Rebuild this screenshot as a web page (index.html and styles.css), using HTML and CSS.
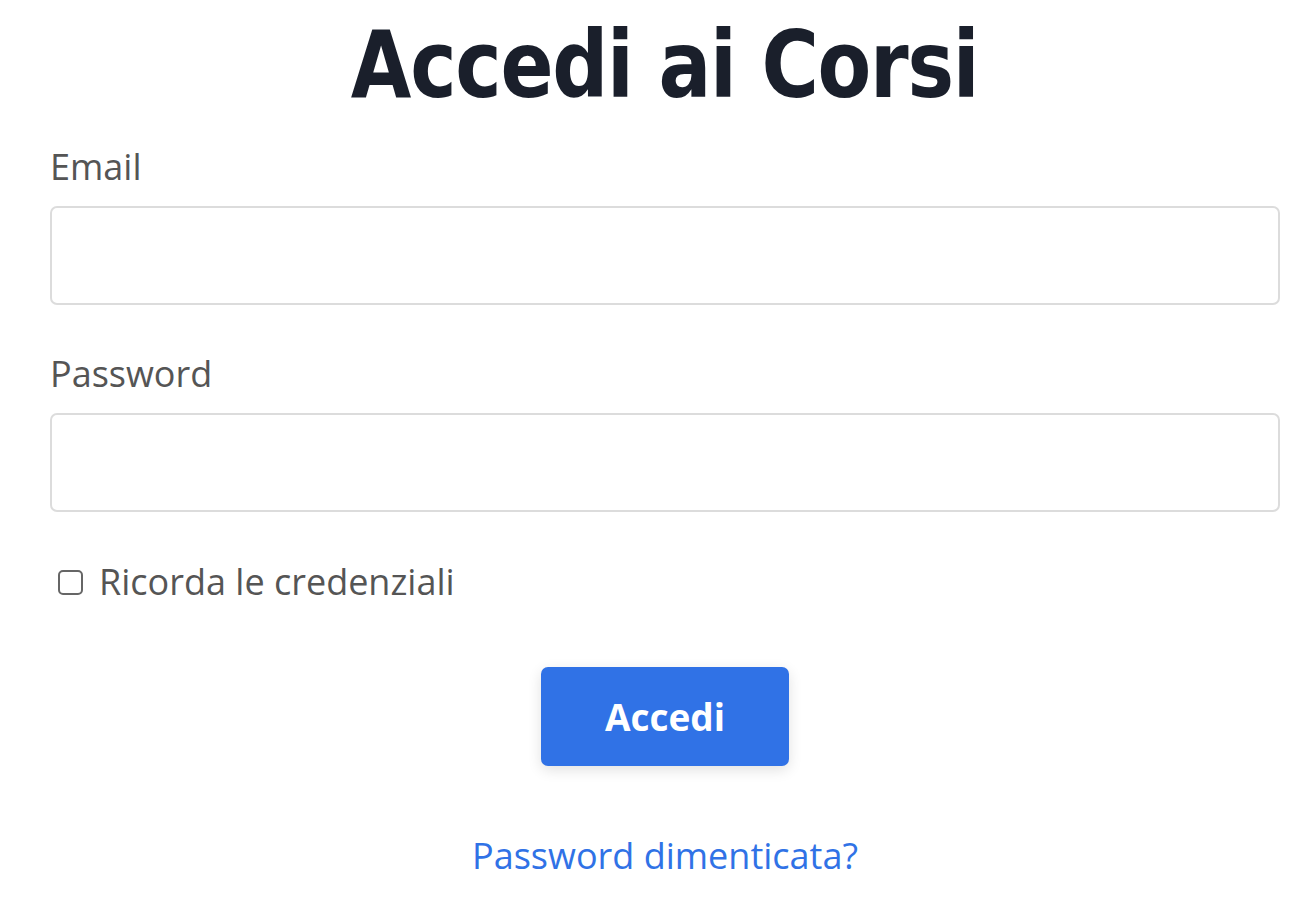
FILE: index.html
```html
<!DOCTYPE html>
<html lang="it">
<head>
<meta charset="utf-8">
<title>Accedi ai Corsi</title>
<link rel="stylesheet" href="styles.css">
</head>
<body>
<main class="login">
  <header class="head">
    <h1 class="title">Accedi ai Corsi</h1>
  </header>
  <form class="form">
    <label class="label" for="email">Email</label>
    <input class="field" id="email" type="email">
    <label class="label label-next" for="pw">Password</label>
    <input class="field" id="pw" type="password">
    <label class="remember"><input class="check" type="checkbox"><span>Ricorda le credenziali</span></label>
    <div class="actions"><button type="button" class="btn">Accedi</button></div>
    <div class="forgot"><a href="#" class="link">Password dimenticata?</a></div>
  </form>
</main>
</body>
</html>
```
FILE: styles.css
```css
html, body {
  margin: 0;
  padding: 0;
  background: #fff;
}
.login {
  padding: 0 32px 0 50px;
  font-family: "Open Sans", "DejaVu Sans", sans-serif;
  color: #555;
}
.head {
  display: flex;
  justify-content: center;
  padding-top: 13px;
}
.title {
  margin: 0;
  font-family: "DejaVu Sans", sans-serif;
  font-weight: 700;
  font-size: 90px;
  line-height: 104px;
  letter-spacing: -1.5px;
  color: #1a1f2b;
  white-space: nowrap;
  transform: scale(0.87, 1.02);
  transform-origin: 50% 50%;
}
.form {
  display: flex;
  flex-direction: column;
}
.label {
  display: block;
  margin-top: 25px;
  font-size: 36px;
  line-height: 49px;
  color: #555;
}
.label-next {
  margin-top: 44px;
}
.field {
  box-sizing: border-box;
  display: block;
  width: 100%;
  height: 99px;
  margin-top: 15px;
  border: 2px solid #dcdcdc;
  border-radius: 7px;
  background: #fff;
  outline: none;
}
.remember {
  display: flex;
  align-items: center;
  gap: 16px;
  margin-top: 45px;
  padding-left: 8px;
  font-size: 36px;
  line-height: 49px;
  color: #555;
}
.check {
  appearance: none;
  -webkit-appearance: none;
  margin: 2px 0 0 0;
  width: 25px;
  height: 25px;
  box-sizing: border-box;
  border: 2px solid #666;
  border-radius: 5px;
  background: #fff;
}
.actions {
  display: flex;
  justify-content: center;
  margin-top: 61px;
}
.btn {
  width: 248px;
  height: 99px;
  border: none;
  border-radius: 7px;
  background: #3072e6;
  color: #fff;
  font-family: "Open Sans", "DejaVu Sans", sans-serif;
  font-weight: bold;
  font-size: 37px;
  box-shadow: 0 4px 14px rgba(0, 0, 0, 0.12);
  cursor: pointer;
}
.forgot {
  display: flex;
  justify-content: center;
  margin-top: 65px;
}
.link {
  font-size: 36px;
  line-height: 49px;
  color: #3072e6;
  text-decoration: none;
}
```
